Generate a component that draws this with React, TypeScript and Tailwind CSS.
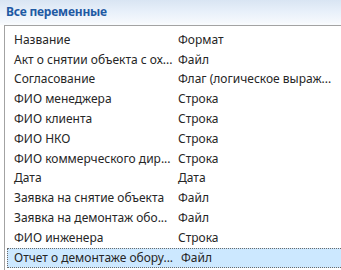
import React from "react";

const rows: [string, string][] = [
  ["Название", "Формат"],
  ["Акт о снятии объекта с ох...", "Файл"],
  ["Согласование", "Флаг (логическое выраж..."],
  ["ФИО менеджера", "Строка"],
  ["ФИО клиента", "Строка"],
  ["ФИО НКО", "Строка"],
  ["ФИО коммерческого дир...", "Строка"],
  ["Дата", "Дата"],
  ["Заявка на снятие объекта", "Файл"],
  ["Заявка на демонтаж обо...", "Файл"],
  ["ФИО инженера", "Строка"],
  ["Отчет о демонтаже обору...", "Файл"],
];

export default function App() {
  return (
    <div
      className="w-[341px] h-[270px] bg-white overflow-hidden text-[12px] text-[#262626]"
      style={{ fontFamily: '"Noto Sans", "Open Sans", sans-serif' }}
    >
      <div className="h-[23px] bg-gradient-to-b from-[#d9e5f3] via-[#e8f0fa] to-[#f6f9fd] flex items-center pl-[6px]">
        <span className="font-bold text-[#1f5aa3] text-[12px] leading-none tracking-[-0.2px]">Все переменные</span>
      </div>
      <div className="h-[2px] bg-[#f8fbfe]" />
      <div className="ml-[4px] border-l border-t border-[#a3a3a3] pt-[4px] h-[245px] flex flex-col">
        {rows.map(([a, b], i) => {
          const sel = i === rows.length - 1;
          return (
            <div
              key={i}
              className={
                "flex items-center h-[19.8px] shrink-0 " +
                (sel ? "bg-[#cce8ff] border border-dotted border-[#6b6b6b] ml-[2px] -mr-[2px]" : "")
              }
            >
              <div className={"w-[168px] whitespace-nowrap overflow-hidden " + (sel ? "pl-[6px]" : "pl-[9px]")}>{a}</div>
              <div className="pl-[5px] whitespace-nowrap overflow-hidden flex-1">{b}</div>
            </div>
          );
        })}
      </div>
    </div>
  );
}
